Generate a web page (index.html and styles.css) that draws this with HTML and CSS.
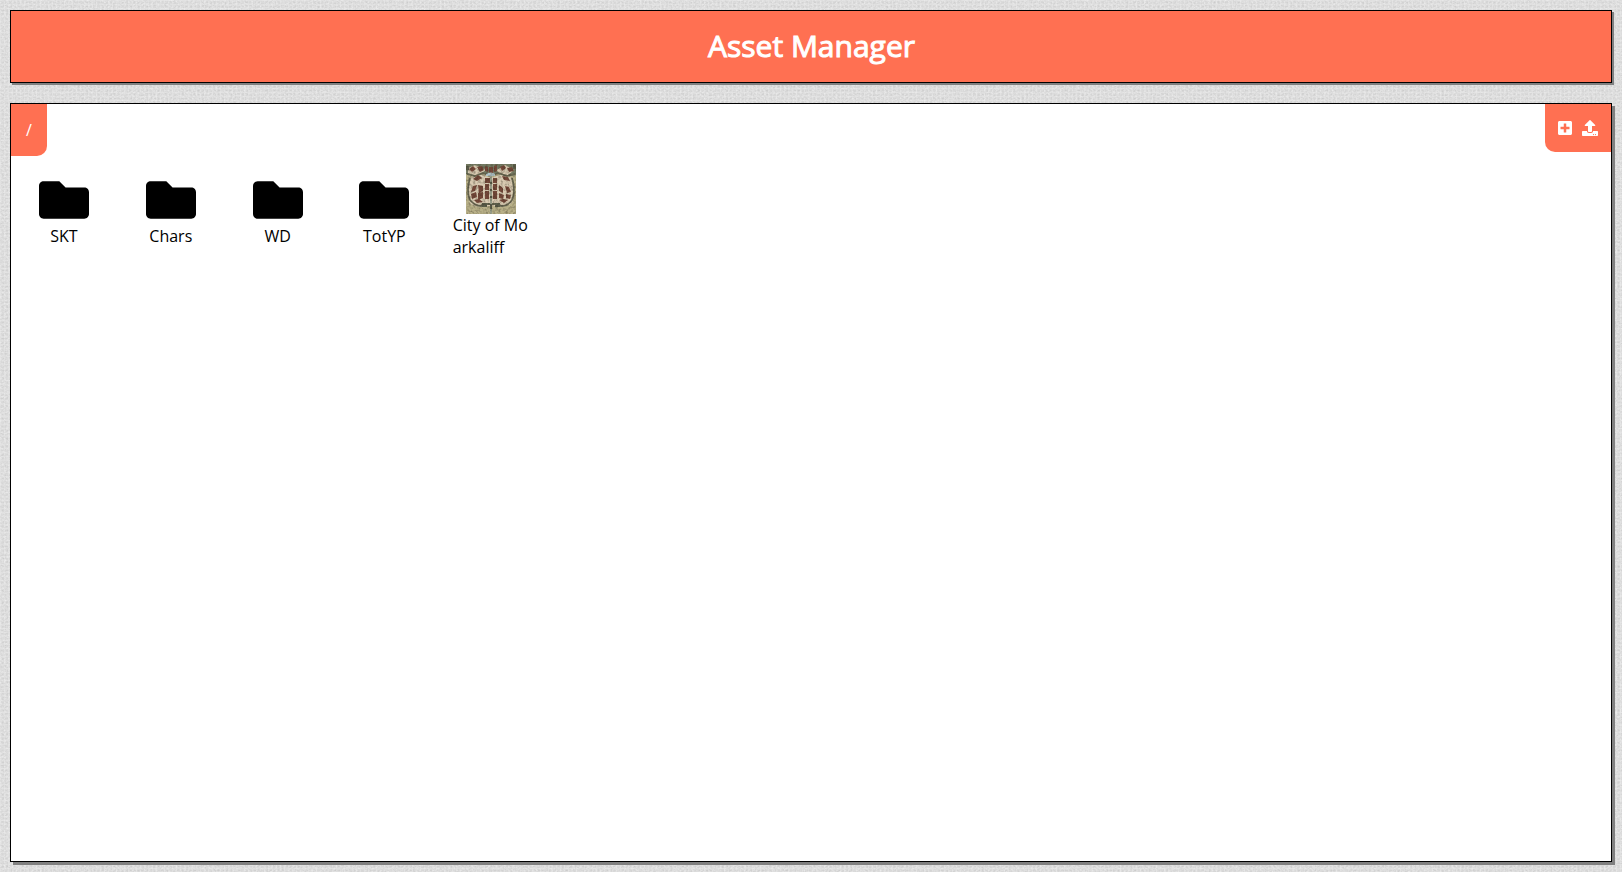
FILE: index.html
```html
<!DOCTYPE html>
<html lang="en">
<head>
<meta charset="utf-8">
<title>Asset Manager</title>
<link rel="stylesheet" href="styles.css">
</head>
<body>
<svg class="texture" aria-hidden="true">
  <filter id="linen" x="0" y="0" width="100%" height="100%" color-interpolation-filters="sRGB">
    <feTurbulence type="fractalNoise" baseFrequency="0.45 0.6" numOctaves="2" seed="4"/>
    <feColorMatrix values="0.14 0 0 0 0.790  0.14 0 0 0 0.790  0.14 0 0 0 0.790  0 0 0 0 1"/>
  </filter>
  <pattern id="weave" width="4" height="4" patternUnits="userSpaceOnUse">
    <path fill="#fff" opacity=".16" d="M0 0h1v4H0zM0 0h4v1H0z"/>
    <path fill="#000" opacity=".02" d="M2 2h2v1H2z"/>
  </pattern>
  <rect width="100%" height="100%" filter="url(#linen)"/>
  <rect width="100%" height="100%" fill="url(#weave)"/>
</svg>
<div class="page">
  <header class="header"><h1 class="title">Asset Manager</h1></header>
  <main class="panel">
    <div class="toolbar">
      <nav class="breadcrumb">/</nav>
      <div class="actions">
        <svg class="icon-plus" viewBox="0 32 448 448"><path fill="#fff" d="M400 32H48C21.500 32 0 53.500 0 80v352c0 26.500 21.500 48 48 48h352c26.500 0 48-21.500 48-48V80c0-26.500-21.500-48-48-48zm-32 252c0 6.600-5.400 12-12 12h-92v92c0 6.600-5.400 12-12 12h-56c-6.600 0-12-5.400-12-12v-92H92c-6.600 0-12-5.400-12-12v-56c0-6.600 5.400-12 12-12h92v-92c0-6.600 5.400-12 12-12h56c6.600 0 12 5.400 12 12v92h92c6.600 0 12 5.400 12 12v56z"/></svg>
        <svg class="icon-upload" viewBox="0 0 512 512"><path fill="#fff" d="M296 384h-80c-13.300 0-24-10.700-24-24V192h-87.700c-17.800 0-26.700-21.500-14.100-34.100L242.300 5.700c7.500-7.500 19.800-7.500 27.300 0l152.200 152.200c12.600 12.600 3.700 34.100-14.100 34.100H320v168c0 13.300-10.700 24-24 24zm216-8v112c0 13.300-10.700 24-24 24H24c-13.300 0-24-10.700-24-24V376c0-13.300 10.700-24 24-24h136v8c0 30.900 25.100 56 56 56h80c30.900 0 56-25.100 56-56v-8h136c13.300 0 24 10.700 24 24zm-124 88c0-11-9-20-20-20s-20 9-20 20 9 20 20 20 20-9 20-20zm64 0c0-11-9-20-20-20s-20 9-20 20 9 20 20 20 20-9 20-20z"/></svg>
      </div>
    </div>
    <div class="assets">
      <div class="asset folder"><svg class="thumb" viewBox="0 0 512 512"><path d="M464 128H272l-64-64H48C21.500 64 0 85.500 0 112v288c0 26.500 21.500 48 48 48h416c26.500 0 48-21.500 48-48V176c0-26.500-21.500-48-48-48z"/></svg><span class="name">SKT</span></div>
      <div class="asset folder"><svg class="thumb" viewBox="0 0 512 512"><path d="M464 128H272l-64-64H48C21.500 64 0 85.500 0 112v288c0 26.500 21.500 48 48 48h416c26.500 0 48-21.500 48-48V176c0-26.500-21.500-48-48-48z"/></svg><span class="name">Chars</span></div>
      <div class="asset folder"><svg class="thumb" viewBox="0 0 512 512"><path d="M464 128H272l-64-64H48C21.500 64 0 85.500 0 112v288c0 26.500 21.500 48 48 48h416c26.500 0 48-21.500 48-48V176c0-26.500-21.500-48-48-48z"/></svg><span class="name">WD</span></div>
      <div class="asset folder"><svg class="thumb" viewBox="0 0 512 512"><path d="M464 128H272l-64-64H48C21.500 64 0 85.500 0 112v288c0 26.500 21.500 48 48 48h416c26.500 0 48-21.500 48-48V176c0-26.500-21.500-48-48-48z"/></svg><span class="name">TotYP</span></div>
      <div class="asset">
        <svg class="thumb" viewBox="0 0 50 50">
          <filter id="grain" x="0" y="0" width="100%" height="100%" color-interpolation-filters="sRGB">
            <feTurbulence type="fractalNoise" baseFrequency="0.4" numOctaves="3" seed="9"/>
            <feColorMatrix values="0 0 0 0 0.15  0 0 0 0 0.13  0 0 0 0 0.08  2.400 0 0 0 -0.950"/>
          </filter>
          <rect width="50" height="50" fill="#b8b088"/>
          <path fill="#747a62" d="M0 0h50v11q-10 3-18-1H18Q8 13 0 10z"/>
          <path fill="#d9cbb2" d="M5 13Q13 8 22 13h6q9-5 17 0 5 13 1 26-8 6-18 3h-6q-12 3-18-3Q0 26 5 13zM2 4l7-3 11 5-9 6-9-3zM31 6l8-5 9 5-7 6-8-2z"/>
          <path fill="none" stroke="#66654f" stroke-width="1.800" d="M1 10l8 2 8-3 5 2M49 10l-8 2-9-3-5 2M4 14Q0 27 4 36q5 6 11 6l3-2h14l3 2q7 0 11-6 4-9 0-22"/>
          <g fill="#744839">
            <path d="M3 5l4-3 3 3-4 3zM11 3l5-1 2 4-4 2zM19 2l3 1v5l-3-1zM23 3h4v6h-4zM28 2l3-1v6l-3 1zM34 3l4-2 2 3-4 3zM41 4l5-1 2 4-5 1zM7 15l5-4 4 3-5 3zM36 12l6 1 2 4-6-1z"/>
            <path d="M19 14h5v5h-5zM27 14h4v5h-4zM19 20h4v6h-4zM27 20h4v6h-4zM19 27h4v8h-4zM27 27h4v8h-4z"/>
            <path d="M7 22l4-1-2 6-4 1zM12 21l5 1v5l-4 2zM5 30l5-2 1 5-5 2zM12 29l5-1v6l-5 2zM8 36l5-1 4 3-6 1zM33 21l4 3v5l-4-2zM39 22l4 1 2 5-4 1zM33 29l5 2-1 4-4-1zM40 30l5 1-1 4-4-1zM33 36l4-1 5 1-4 3z"/>
          </g>
          <path fill="#979c88" d="M24 12h2v38h-2z"/>
          <path fill="#b2c6ca" d="M20 10q5-3 9 0v2h-9z"/>
          <path fill="#5b5d4a" d="M16 39h5v4h-5zM29 39h5v4h-5zM24 18h2v2h-2zM24 25h2v2h-2zM24 32h2v2h-2zM24 40h2v5h-2zM0 2h3v4H0zM47 0h3v5h-3z"/>
          <rect width="50" height="50" filter="url(#grain)" opacity=".32"/>
        </svg>
        <span class="name">City of Moarkaliff</span>
      </div>
    </div>
  </main>
</div>
</body>
</html>
```
FILE: styles.css
```css
* { box-sizing: border-box; }
html, body { height: 100%; margin: 0; }
body {
  background: #dcdcdc;
  font: 16px/22px "Open Sans", sans-serif;
  color: #000;
  overflow: hidden;
}
.texture { position: absolute; inset: 0; width: 100%; height: 100%; }
.page {
  position: relative;
  display: flex;
  flex-direction: column;
  gap: 20px;
  height: 100%;
  padding: 10px;
}
.header {
  flex: none;
  display: flex;
  justify-content: center;
  height: 73px;
  padding: 14px 0 0 1px;
  background: #ff7052;
  border: 1px solid #000;
  box-shadow: 2px 2px 0 gray;
}
.title {
  margin: 0;
  font-size: 30px;
  line-height: 41px;
  font-weight: 400;
  color: #fff;
  -webkit-text-stroke: 1px #fff;
}
.panel {
  flex: 1;
  background: #fff;
  border: 1px solid #000;
  box-shadow: 3px 3px 0 gray;
}
.toolbar {
  display: flex;
  justify-content: space-between;
  align-items: flex-start;
  height: 52px;
}
.breadcrumb {
  width: 36px;
  height: 52px;
  padding: 15px 0 0 15px;
  background: #ff7052;
  color: #fff;
  border-bottom-right-radius: 10px;
}
.actions {
  display: flex;
  gap: 10px;
  width: 66px;
  height: 48px;
  padding: 16px 0 0 13px;
  background: #ff7052;
  border-bottom-left-radius: 10px;
}
.icon-plus { width: 14px; height: 14px; margin-top: 1px; }
.icon-upload { width: 16px; height: 16px; }
.assets {
  display: flex;
  gap: 29.800px;
  padding: 8px 0 0 14.500px;
}
.asset {
  display: flex;
  flex-direction: column;
  align-items: center;
  width: 77px;
}
.folder { padding-top: 11px; }
.thumb { flex: none; width: 50px; height: 50px; }
.name { max-width: 100%; word-break: break-all; }
```
